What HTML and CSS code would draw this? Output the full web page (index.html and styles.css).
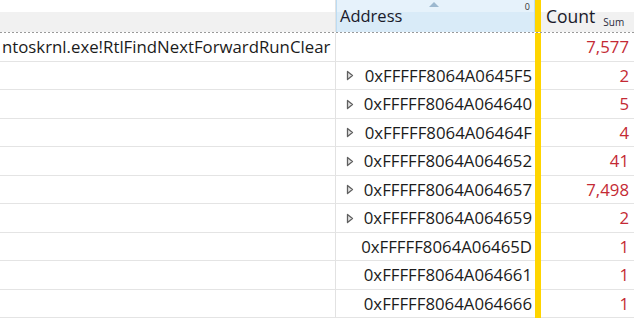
FILE: index.html
```html
<!DOCTYPE html>
<html>
<head>
<meta charset="utf-8">
<link rel="stylesheet" href="styles.css">
</head>
<body>
<div class="table">
  <div class="head">
    <div class="hcell h-name"></div>
    <div class="hcell h-addr">
      <span class="h-label">Address</span>
      <span class="sort-arrow"></span>
      <span class="sort-idx">0</span>
    </div>
    <div class="splitter"></div>
    <div class="hcell h-count"><span class="h-label count-label">Count</span><span class="agg">Sum</span></div>
  </div>
  <div class="dash"></div>
  <div class="row">
    <div class="cell name">ntoskrnl.exe!RtlFindNextForwardRunClear</div>
    <div class="cell addr"></div>
    <div class="splitter"></div>
    <div class="cell count">7,577</div>
  </div>
  <div class="row">
    <div class="cell name"></div>
    <div class="cell addr"><svg class="tri" width="8" height="11" viewBox="0 0 8 11"><path d="M1.5 1.5 L6.5 5.5 L1.5 9.5 Z"/></svg><span class="addr-text">0xFFFFF8064A0645F5</span></div>
    <div class="splitter"></div>
    <div class="cell count">2</div>
  </div>
  <div class="row">
    <div class="cell name"></div>
    <div class="cell addr"><svg class="tri" width="8" height="11" viewBox="0 0 8 11"><path d="M1.5 1.5 L6.5 5.5 L1.5 9.5 Z"/></svg><span class="addr-text">0xFFFFF8064A064640</span></div>
    <div class="splitter"></div>
    <div class="cell count">5</div>
  </div>
  <div class="row">
    <div class="cell name"></div>
    <div class="cell addr"><svg class="tri" width="8" height="11" viewBox="0 0 8 11"><path d="M1.5 1.5 L6.5 5.5 L1.5 9.5 Z"/></svg><span class="addr-text">0xFFFFF8064A06464F</span></div>
    <div class="splitter"></div>
    <div class="cell count">4</div>
  </div>
  <div class="row">
    <div class="cell name"></div>
    <div class="cell addr"><svg class="tri" width="8" height="11" viewBox="0 0 8 11"><path d="M1.5 1.5 L6.5 5.5 L1.5 9.5 Z"/></svg><span class="addr-text">0xFFFFF8064A064652</span></div>
    <div class="splitter"></div>
    <div class="cell count">41</div>
  </div>
  <div class="row">
    <div class="cell name"></div>
    <div class="cell addr"><svg class="tri" width="8" height="11" viewBox="0 0 8 11"><path d="M1.5 1.5 L6.5 5.5 L1.5 9.5 Z"/></svg><span class="addr-text">0xFFFFF8064A064657</span></div>
    <div class="splitter"></div>
    <div class="cell count">7,498</div>
  </div>
  <div class="row">
    <div class="cell name"></div>
    <div class="cell addr"><svg class="tri" width="8" height="11" viewBox="0 0 8 11"><path d="M1.5 1.5 L6.5 5.5 L1.5 9.5 Z"/></svg><span class="addr-text">0xFFFFF8064A064659</span></div>
    <div class="splitter"></div>
    <div class="cell count">2</div>
  </div>
  <div class="row">
    <div class="cell name"></div>
    <div class="cell addr"><span class="addr-text">0xFFFFF8064A06465D</span></div>
    <div class="splitter"></div>
    <div class="cell count">1</div>
  </div>
  <div class="row">
    <div class="cell name"></div>
    <div class="cell addr"><span class="addr-text">0xFFFFF8064A064661</span></div>
    <div class="splitter"></div>
    <div class="cell count">1</div>
  </div>
  <div class="row">
    <div class="cell name"></div>
    <div class="cell addr"><span class="addr-text">0xFFFFF8064A064666</span></div>
    <div class="splitter"></div>
    <div class="cell count">1</div>
  </div>
</div>
</body>
</html>
```

FILE: styles.css
```css
html, body {
  margin: 0;
  padding: 0;
  background: #ffffff;
}
body {
  width: 634px;
  height: 320px;
  overflow: hidden;
  font-family: "Open Sans", "Noto Sans", sans-serif;
  font-size: 16.8px;
  color: #1b1b1b;
}
.table {
  display: flex;
  flex-direction: column;
}
.head, .row {
  display: grid;
  grid-template-columns: 336px 199px 6px 93px;
}
.head {
  height: 32px;
  background: linear-gradient(#ffffff 0 12px, #f1f1f1 12px);
}
.hcell {
  position: relative;
  display: flex;
  align-items: center;
}
.h-name {
  border-right: 1px solid #e2e2e2;
}
.h-addr {
  background: linear-gradient(#e6f2fb 0 12px, #d9ebf8 12px);
  border-left: 1px solid #bcdcf3;
  border-right: 1px solid #bcdcf3;
  padding-left: 3px;
  padding-bottom: 1px;
}
.h-label {
  font-size: 16.5px;
  color: #1a1a2a;
}
.count-label {
  font-size: 17.5px;
}
.sort-arrow {
  position: absolute;
  left: 92px;
  top: 2px;
  width: 0;
  height: 0;
  border-left: 5px solid transparent;
  border-right: 5px solid transparent;
  border-bottom: 5px solid #9cb8cf;
}
.sort-idx {
  position: absolute;
  right: 4px;
  top: 0px;
  font-size: 9px;
  color: #333;
}
.h-count {
  padding-left: 5px;
  align-items: center;
}
.agg {
  font-size: 10px;
  margin-left: 8px;
  margin-top: 12px;
  color: #2a2a3a;
}
.splitter {
  background: #ffd500;
}
.dash {
  height: 1px;
  background: repeating-linear-gradient(90deg, #9a9a9a 0 2px, #ffffff 2px 4px);
}
.row {
  height: 28.5px;
  box-sizing: border-box;
}
.cell {
  display: flex;
  align-items: center;
  border-bottom: 1px solid #e4e4e4;
  white-space: nowrap;
  overflow: hidden;
}
.name {
  border-right: 1px solid #e2e2e2;
  padding-left: 2px;
}
.addr {
  position: relative;
  justify-content: flex-end;
  padding-right: 3px;
}
.tri {
  position: absolute;
  left: 10px;
  top: 50%;
  margin-top: -5px;
}
.tri path {
  fill: #e4e4e4;
  stroke: #606060;
  stroke-width: 1.3;
  stroke-linejoin: round;
}
.count {
  justify-content: flex-end;
  padding-right: 5px;
  color: #c42a34;
}
```
